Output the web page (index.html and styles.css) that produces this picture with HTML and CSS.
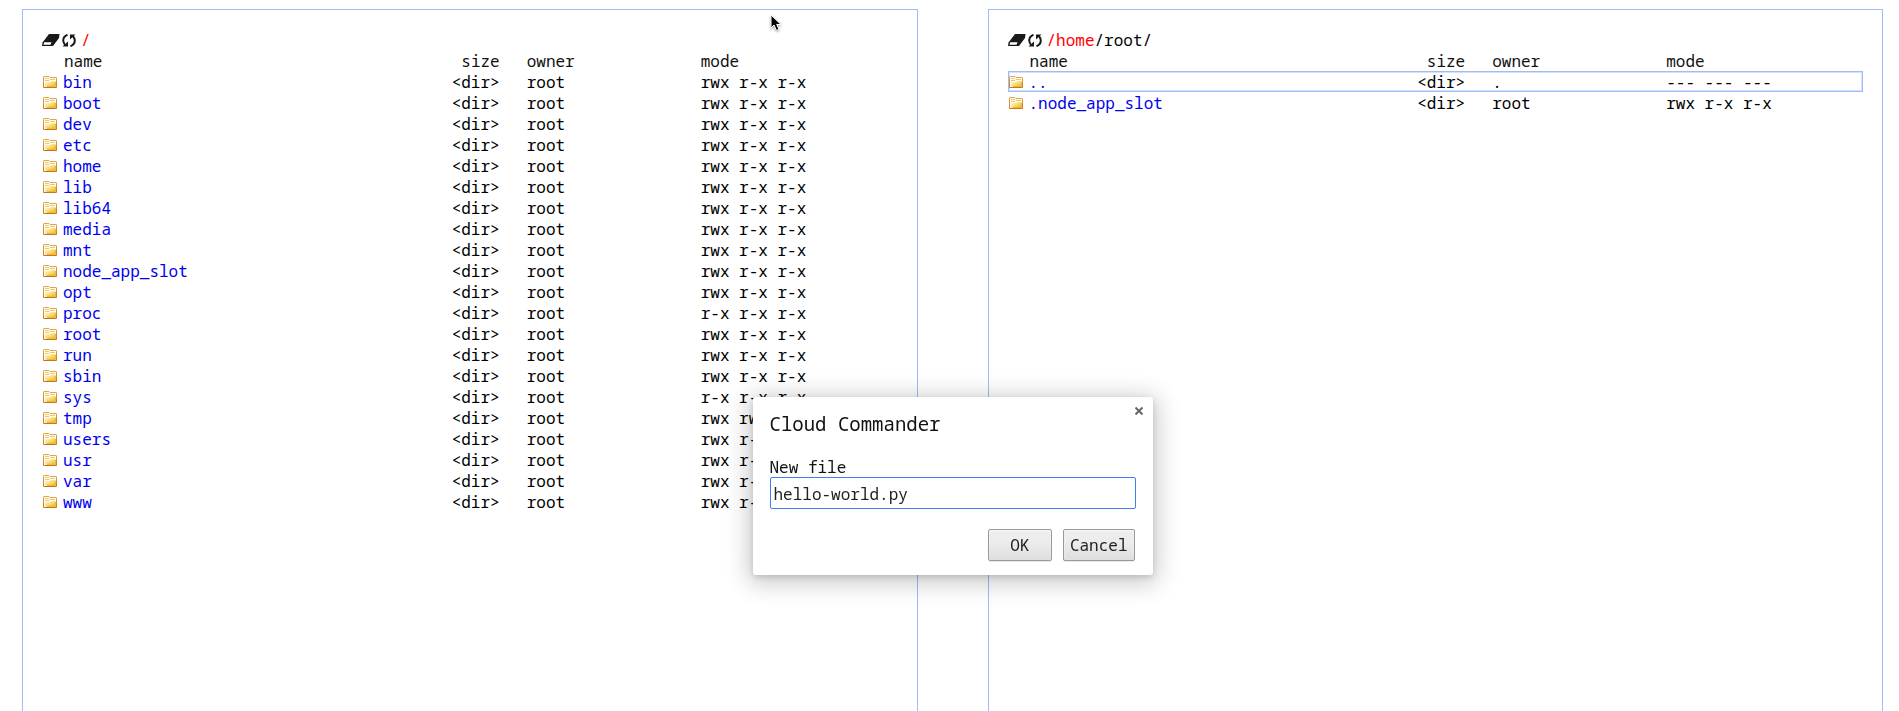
FILE: index.html
```
<!DOCTYPE html>
<html lang="en">
<head>
<meta charset="utf-8">
<title>Cloud Commander</title>
<link rel="stylesheet" href="styles.css">
</head>
<body>
<svg class="defs" aria-hidden="true">
  <defs>
    <linearGradient id="folder-fill" x1="0" y1="0" x2="1" y2="1">
      <stop offset="0" stop-color="#fffbe0"/>
      <stop offset="0.5" stop-color="#f6dc7c"/>
      <stop offset="1" stop-color="#eeb51c"/>
    </linearGradient>
    <linearGradient id="folder-edge" x1="0" y1="0" x2="0" y2="1">
      <stop offset="0" stop-color="#dfa850"/>
      <stop offset="1" stop-color="#c87428"/>
    </linearGradient>
  </defs>
  <symbol id="folder" viewBox="0 0 14 12">
    <path d="M.5 11.5V1Q.5.5 1 .5H6L7 1.5H13Q13.5 1.5 13.5 2V11.5Z" fill="#fffdf0" stroke="url(#folder-edge)"/>
    <path d="M2 10.500V6H7L8 5H12.500V10.500Z" fill="url(#folder-fill)"/>
    <path d="M2 2.500H6M2 4.500H6L7 3.500H12" fill="none" stroke="#ecc868"/>
    <path d="M4 10.500H12.500V6" fill="none" stroke="#eebb22"/>
  </symbol>
  <symbol id="eraser" viewBox="0 0 18 12">
    <path d="M7 0H17.500L17 4L11 12H0L.5 8.500Z" fill="#1a1a1a"/>
    <path d="M2.200 8.300H9.500L8.500 10.700H1.500Z" fill="#fff"/>
  </symbol>
  <symbol id="refresh" viewBox="0 0 14 13">
    <path d="M5.500 .8Q1.200 2.500 1.200 6.500Q1.400 9 3.200 11M8.500 12.200Q12.800 10.500 12.800 6.500Q12.600 4 10.800 2" fill="none" stroke="#1a1a1a" stroke-width="2"/>
    <path d="M.5 12.500H6V7.500ZM13.500 .5H8V5.500Z" fill="#1a1a1a"/>
  </symbol>
</svg>

<main class="panels">
  <section class="panel">
    <header class="path">
      <button class="tool" aria-label="Clear storage"><svg class="eraser"><use href="#eraser"/></svg></button>
      <button class="tool" aria-label="Refresh"><svg class="refresh"><use href="#refresh"/></svg></button>
      <span><a class="crumb" href="#">/</a></span>
    </header>
    <table class="files">
      <thead><tr><th class="name">name</th><th class="size">size</th><th class="owner">owner</th><th class="mode">mode</th></tr></thead>
      <tbody>
        <tr><td><svg class="folder"><use href="#folder"/></svg><a href="#">bin</a></td><td>&lt;dir&gt;</td><td>root</td><td>rwx r-x r-x</td></tr>
        <tr><td><svg class="folder"><use href="#folder"/></svg><a href="#">boot</a></td><td>&lt;dir&gt;</td><td>root</td><td>rwx r-x r-x</td></tr>
        <tr><td><svg class="folder"><use href="#folder"/></svg><a href="#">dev</a></td><td>&lt;dir&gt;</td><td>root</td><td>rwx r-x r-x</td></tr>
        <tr><td><svg class="folder"><use href="#folder"/></svg><a href="#">etc</a></td><td>&lt;dir&gt;</td><td>root</td><td>rwx r-x r-x</td></tr>
        <tr><td><svg class="folder"><use href="#folder"/></svg><a href="#">home</a></td><td>&lt;dir&gt;</td><td>root</td><td>rwx r-x r-x</td></tr>
        <tr><td><svg class="folder"><use href="#folder"/></svg><a href="#">lib</a></td><td>&lt;dir&gt;</td><td>root</td><td>rwx r-x r-x</td></tr>
        <tr><td><svg class="folder"><use href="#folder"/></svg><a href="#">lib64</a></td><td>&lt;dir&gt;</td><td>root</td><td>rwx r-x r-x</td></tr>
        <tr><td><svg class="folder"><use href="#folder"/></svg><a href="#">media</a></td><td>&lt;dir&gt;</td><td>root</td><td>rwx r-x r-x</td></tr>
        <tr><td><svg class="folder"><use href="#folder"/></svg><a href="#">mnt</a></td><td>&lt;dir&gt;</td><td>root</td><td>rwx r-x r-x</td></tr>
        <tr><td><svg class="folder"><use href="#folder"/></svg><a href="#">node_app_slot</a></td><td>&lt;dir&gt;</td><td>root</td><td>rwx r-x r-x</td></tr>
        <tr><td><svg class="folder"><use href="#folder"/></svg><a href="#">opt</a></td><td>&lt;dir&gt;</td><td>root</td><td>rwx r-x r-x</td></tr>
        <tr><td><svg class="folder"><use href="#folder"/></svg><a href="#">proc</a></td><td>&lt;dir&gt;</td><td>root</td><td>r-x r-x r-x</td></tr>
        <tr><td><svg class="folder"><use href="#folder"/></svg><a href="#">root</a></td><td>&lt;dir&gt;</td><td>root</td><td>rwx r-x r-x</td></tr>
        <tr><td><svg class="folder"><use href="#folder"/></svg><a href="#">run</a></td><td>&lt;dir&gt;</td><td>root</td><td>rwx r-x r-x</td></tr>
        <tr><td><svg class="folder"><use href="#folder"/></svg><a href="#">sbin</a></td><td>&lt;dir&gt;</td><td>root</td><td>rwx r-x r-x</td></tr>
        <tr><td><svg class="folder"><use href="#folder"/></svg><a href="#">sys</a></td><td>&lt;dir&gt;</td><td>root</td><td>r-x r-x r-x</td></tr>
        <tr><td><svg class="folder"><use href="#folder"/></svg><a href="#">tmp</a></td><td>&lt;dir&gt;</td><td>root</td><td>rwx rwx rwx</td></tr>
        <tr><td><svg class="folder"><use href="#folder"/></svg><a href="#">users</a></td><td>&lt;dir&gt;</td><td>root</td><td>rwx r-x r-x</td></tr>
        <tr><td><svg class="folder"><use href="#folder"/></svg><a href="#">usr</a></td><td>&lt;dir&gt;</td><td>root</td><td>rwx r-x r-x</td></tr>
        <tr><td><svg class="folder"><use href="#folder"/></svg><a href="#">var</a></td><td>&lt;dir&gt;</td><td>root</td><td>rwx r-x r-x</td></tr>
        <tr><td><svg class="folder"><use href="#folder"/></svg><a href="#">www</a></td><td>&lt;dir&gt;</td><td>root</td><td>rwx r-x r-x</td></tr>
      </tbody>
    </table>
  </section>

  <section class="panel">
    <header class="path">
      <button class="tool" aria-label="Clear storage"><svg class="eraser"><use href="#eraser"/></svg></button>
      <button class="tool" aria-label="Refresh"><svg class="refresh"><use href="#refresh"/></svg></button>
      <span><a class="crumb" href="#">/</a><a class="crumb" href="#">home</a>/root/</span>
    </header>
    <table class="files">
      <thead><tr><th class="name">name</th><th class="size">size</th><th class="owner">owner</th><th class="mode">mode</th></tr></thead>
      <tbody>
        <tr class="current"><td><svg class="folder"><use href="#folder"/></svg><a href="#">..</a></td><td>&lt;dir&gt;</td><td>.</td><td>--- --- ---</td></tr>
        <tr><td><svg class="folder"><use href="#folder"/></svg><a href="#">.node_app_slot</a></td><td>&lt;dir&gt;</td><td>root</td><td>rwx r-x r-x</td></tr>
      </tbody>
    </table>
  </section>
</main>

<form class="dialog" role="dialog" aria-labelledby="dialog-title">
  <button class="close" type="button" aria-label="Close"><svg viewBox="0 0 8 8"><path d="M.5 .5L7.500 7.500M7.500 .5L.5 7.500"/></svg></button>
  <h1 id="dialog-title">Cloud Commander</h1>
  <label for="file-name">New file</label>
  <input id="file-name" type="text" value="hello-world.py">
  <div class="actions">
    <button class="button" type="submit">OK</button>
    <button class="button" type="button">Cancel</button>
  </div>
</form>

<svg class="pointer" viewBox="0 0 12 18" aria-hidden="true"><path d="M1 1V14L4 11L6.500 16.500L9 15.300L6.700 10.500H11Z"/></svg>
</body>
</html>
```
FILE: styles.css
```
* {
  box-sizing: border-box;
}

body {
  margin: 0;
  background: #fff;
  color: #000;
  font: 16px/21px "Droid Sans Mono", "Noto Sans Mono", "DejaVu Sans Mono", monospace;
}

button,
input {
  font: inherit;
}

a {
  color: #00e;
  text-decoration: none;
}

.defs {
  position: absolute;
  width: 0;
  height: 0;
}

.panels {
  display: grid;
  grid-template-columns: 1fr 1fr;
  gap: 70px;
  height: 100vh;
  padding: 9px 16px 0 22px;
}

.panel {
  padding: 20px 19px 0;
  border: 1px solid #9dbcf8;
  border-bottom: 0;
}

.path {
  display: flex;
  align-items: center;
  height: 20px;
}

.tool {
  display: flex;
  padding: 0;
  border: 0;
  background: none;
}

.eraser {
  width: 18px;
  height: 12px;
  margin-right: 2px;
}

.refresh {
  width: 14px;
  height: 13px;
  margin-right: 5px;
}

.crumb {
  color: #f00;
}

.files {
  width: 100%;
  table-layout: fixed;
  border-spacing: 0;
}

.files th,
.files td {
  height: 21px;
  padding: 2px 0 0;
  font-weight: normal;
  line-height: 19px;
  text-align: left;
  white-space: nowrap;
}

.files th {
  color: #111;
}

.files .name {
  width: 37%;
  padding-left: 22px;
}

.files .size {
  width: 16.5%;
}

.files .owner {
  width: 23.5%;
}

.files th:nth-child(2),
.files td:nth-child(2) {
  text-align: right;
}

.files th:nth-child(3),
.files td:nth-child(3) {
  padding-left: 27px;
}

.folder {
  width: 14px;
  height: 12px;
  margin: 0 6px 0 1px;
}

.current {
  outline: 1px solid #9dbcf8;
  outline-offset: -1px;
  box-shadow: inset 0 0 0 2px #d3e1fc;
}

.dialog {
  position: fixed;
  top: 397px;
  left: calc(50% - 197px);
  display: flex;
  flex-direction: column;
  width: 400px;
  padding: 17px 17px 14px;
  border-radius: 3px;
  background: #fff;
  box-shadow: 0 4px 23px 5px rgba(0, 0, 0, 0.2), 0 2px 6px rgba(0, 0, 0, 0.15);
  color: #111;
}

.dialog h1 {
  margin: 0 0 23px;
  font-size: 19px;
  font-weight: normal;
  line-height: 20px;
}

.dialog label {
  line-height: 20px;
}

.dialog input {
  height: 32px;
  padding: 3px 3px 1px;
  border: 1px solid #3f7ff0;
  border-radius: 2px;
  outline: 0;
  color: #222;
}

.close {
  position: absolute;
  top: 7px;
  right: 7px;
  display: flex;
  padding: 3px;
  border: 0;
  background: none;
}

.close svg {
  width: 8px;
  height: 8px;
  fill: none;
  stroke: #666;
  stroke-width: 2;
}

.actions {
  display: flex;
  justify-content: flex-end;
  gap: 11px;
  margin-top: 20px;
  padding-right: 1px;
}

.button {
  min-width: 64px;
  height: 32px;
  padding: 0 6px;
  border: 1px solid #999;
  border-radius: 2px;
  background: linear-gradient(#ededed 38%, #dedede);
  box-shadow: 0 1px 0 rgba(0, 0, 0, 0.08), inset 0 1px 2px rgba(255, 255, 255, 0.75);
  color: #222;
}

.pointer {
  position: absolute;
  top: 14px;
  left: 770px;
  width: 12px;
  height: 18px;
  fill: #000;
  stroke: #fff;
  filter: drop-shadow(0 1px 1px rgba(0, 0, 0, 0.4));
}
```
